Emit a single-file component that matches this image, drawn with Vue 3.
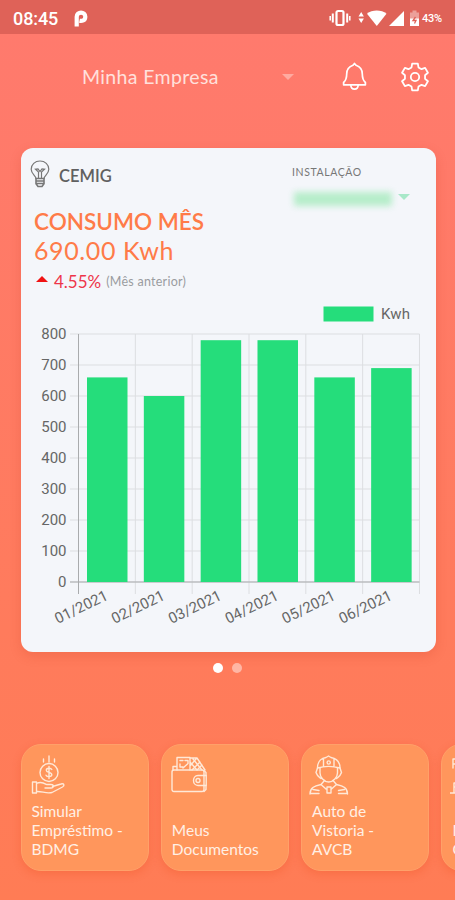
<template>
  <main class="app">
    <header class="status">
      <span class="clock">08:45</span>
      <svg class="p-logo" width="14" height="17" viewBox="0 0 14 17">
        <path d="M2.7 16.5V6.8C2.7 1.2 11.3 1.2 11.3 6.7C11.3 10.7 7.8 11.3 5.5 10.8" fill="none" stroke="#fff" stroke-width="4.2" stroke-linejoin="round" />
      </svg>
      <svg class="status-icons" width="92" height="18" viewBox="0 0 92 18">
        <g fill="none" stroke="#fff">
          <rect x="7.5" y="2" width="7" height="14" rx="1.5" stroke-width="2.2" />
          <path d="M3.8 4.5v9M18.2 4.5v9" stroke-width="2" />
          <path d="M1.2 7v4.5M20.8 7v4.5" stroke-width="1.5" />
        </g>
        <g fill="#fff">
          <path d="M29.5 7.5h5.4L32.2 3zM29.5 9.5h5.4L32.2 14z" />
          <path d="M38 4.8C43 .5 52.5 .5 57.5 4.8L47.8 17z" />
          <path d="M60 17H75V2z" />
          <path d="M81 3.5h2.5v-2h4v2H90V10h-9z" opacity=".4" />
          <path d="M81 9.5h9V17h-9z" />
        </g>
        <path d="M86.5 8l-2.5 3.5h3l-1.5 3" fill="none" stroke="#df6258" stroke-width="1.3" />
      </svg>
      <span class="battery">43%</span>
    </header>

    <nav class="topbar">
      <span class="company">Minha Empresa</span>
      <span class="arrow"></span>
      <svg class="bell" width="25" height="29" viewBox="0 0 25 29" fill="none" stroke="#fff" stroke-width="1.7" stroke-linejoin="round">
        <path d="M12.5 1.5L11 3.3C6.5 4.8 4.7 8 4.7 12C4.7 17 3.8 18.5 1.6 20.5V22.8H23.4V20.5C21.2 18.5 20.3 17 20.3 12C20.3 8 18.5 4.8 14 3.3z" />
        <path d="M8.8 23C9 28.5 16 28.5 16.2 23" />
      </svg>
      <svg class="gear" width="28" height="30" viewBox="-14 -15 28 30" fill="none" stroke="#fff" stroke-width="1.8" stroke-linejoin="round">
        <path :d="gearPath" />
        <circle r="4.2" />
      </svg>
    </nav>

    <section class="card">
      <div class="card-head">
        <svg class="bulb" width="20" height="28" viewBox="0 0 20 28" fill="none" stroke="#777" stroke-width="1.2">
          <path d="M6 18.5C5.8 15.5 1.2 14 1.2 9.2C1.2 4.5 5 1 10 1S18.8 4.5 18.8 9.2C18.8 14 14.2 15.5 14 18.5z" />
          <path d="M8.5 18V12L5.5 9.3L8 9L10 11.5L12 9L14.5 9.3L11.5 12V18" />
          <path d="M6 18.5h8v5.2l-2 2.8H8l-2-2.8zM6 21h8M6.2 23.5h7.6" stroke-width="1.6" />
        </svg>
        <span class="brand">CEMIG</span>
        <div class="install">
          <div class="install-label">INSTALAÇÃO</div>
          <div class="install-value">
            <span class="hidden-number"></span>
            <span class="arrow green"></span>
          </div>
        </div>
      </div>
      <div class="summary">
        <h2>CONSUMO MÊS</h2>
        <div class="total">690.00 Kwh</div>
        <div class="change">
          <span class="up"></span>
          <span class="percent">4.55%</span>
          <span class="previous">(Mês anterior)</span>
        </div>
      </div>
      <svg class="chart" width="415" height="352" viewBox="0 0 415 352">
        <rect x="302.5" y="6.5" width="50" height="15" fill="#25dd7b" />
        <text x="360" y="19" textLength="29">Kwh</text>
        <g stroke="#dcdee1">
          <path v-for="n in 9" :key="n" :d="`M49 ${y((n - 1) * 100)}H398.5`" />
          <path v-for="n in 6" :key="n" :d="`M${57.5 + n * step} 34V294`" />
        </g>
        <g stroke="#a9abad">
          <path d="M57.5 34V294" />
          <path d="M49 282H398.5" />
        </g>
        <text v-for="n in 9" :key="n" x="45.5" :y="y((n - 1) * 100) + 5" text-anchor="end">{{ (n - 1) * 100 }}</text>
        <g v-for="(item, i) in months" :key="item.label">
          <rect :x="66 + i * step" :y="y(item.value)" width="40.5" :height="282 - y(item.value)" fill="#25dd7b" />
          <text :transform="`translate(${88 + i * step} 299) rotate(-26)`" text-anchor="end" textLength="57">{{ item.label }}</text>
        </g>
      </svg>
    </section>

    <div class="dots"><i></i><i></i></div>

    <section class="shortcuts">
      <div class="shortcut">
        <svg width="36" height="40" viewBox="0 0 36 40">
          <path d="M18 1v6M12.5 4v3M23.5 4v3" />
          <circle cx="18" cy="17.5" r="9" />
          <path d="M20.8 14.5C19.8 12.6 15.3 12.8 15.3 15.2C15.3 18 20.8 16.8 20.8 19.8C20.8 22.2 16 22.2 15 20.2M18 11.5v12" />
          <path d="M1.5 27h4v11h-4zM5.5 28.5C10 26 13 28 15.5 29.5H20C23 29.5 23 33 20 33H14M21.5 31.5L30 29C33 28 34 30.5 31.5 32L21 37.5C15 39 11 36 5.5 36.5" />
        </svg>
        <span>Simular<br>Empréstimo -<br>BDMG</span>
      </div>
      <div class="shortcut">
        <svg width="36" height="40" viewBox="0 0 36 40">
          <rect x="1" y="15" width="32" height="21.5" rx="2" />
          <path d="M2 15V11.5h3M6 15V2.5h13V15M19 3h7l8 12M9 5.5h3M9 9v3h3M14 5.5h3v3L12 13M19 7l7 8M22 4l9 11M19 11l6-7M21 15l8-8M26 15l5-5" />
          <path d="M35.2 20.5H27C21 20.5 21 30.5 27 30.5h8.2z" />
          <circle cx="27" cy="25.5" r="2" />
          <path d="M33 15.5l2 2v3M35 30.5v4l-2 2" />
        </svg>
        <span>Meus<br>Documentos</span>
      </div>
      <div class="shortcut">
        <svg class="fireman" width="40" height="40" viewBox="0 0 40 40">
          <path d="M8.5 13C8.5 6 13 3 17 2.5L19.5 1L22 2.5C27 3.5 31 7 31 13C24 11 15 11 8.5 13zM14.5 4v7M25 4v7" />
          <circle cx="19.7" cy="7.5" r="1.6" />
          <path d="M8.5 13L7 17.5C8.5 22 11 22.5 12 23.5M31 13l1.5 4.5C31 22 28.5 22.5 27.5 23.5M11 13V18C11 22 15 27 19.7 27S28.5 22 28.5 18V13" />
          <path d="M1 39C1 33 5 31 12 29.5L15.5 25.5M38.5 39C38.5 33 34.5 31 27.5 29.5L24 25.5M1 38.5h9M29.5 38.5h9M4 34.5l6 1M35.5 34.5l-6 1M12 29.5L17 34M27.5 29.5L22.5 34M18 32h4v6h-4z" />
        </svg>
        <span>Auto de<br>Vistoria -<br>AVCB</span>
      </div>
      <div class="shortcut">
        <svg class="last" width="36" height="40" viewBox="0 0 36 40">
          <path d="M3 4h7M3 9h7M3 4v9M0 38h12M4 37V28h6M4 32h6" />
        </svg>
        <span>M<br>C</span>
      </div>
    </section>
  </main>
</template>

<script setup>
const step = 56.83
const months = [
  { label: '01/2021', value: 660 },
  { label: '02/2021', value: 600 },
  { label: '03/2021', value: 780 },
  { label: '04/2021', value: 780 },
  { label: '05/2021', value: 660 },
  { label: '06/2021', value: 690 },
]

function y(value) {
  return 282 - value * 0.31
}

// six teeth, each one drawn with two inner and two outer points
const gearPath = makeGear()
function makeGear() {
  const points = []
  for (let i = 0; i < 6; i++) {
    const list = [[-20, 10.2], [-12, 13.6], [12, 13.6], [20, 10.2]]
    list.forEach(([deg, r]) => {
      const a = (i * 60 + deg) * Math.PI / 180
      points.push((Math.sin(a) * r).toFixed(2) + ' ' + (-Math.cos(a) * r).toFixed(2))
    })
  }
  return 'M' + points.join('L') + 'Z'
}
</script>

<style>
body {
  margin: 0;
  overflow: hidden;
}
</style>

<style scoped>
.app {
  width: 455px;
  height: 900px;
  overflow: hidden;
  background: linear-gradient(#ff7a6e, #ff7b5c 70%, #ff7c55);
  font-family: Lato, "Noto Sans", sans-serif;
  color: #fff;
}

.status {
  height: 34px;
  box-sizing: border-box;
  padding: 2px 12px 0 13px;
  display: flex;
  align-items: center;
  background: #df6258;
  font-family: Roboto, sans-serif;
}

.clock {
  width: 61px;
  font-size: 18px;
  font-weight: 500;
  letter-spacing: -0.1px;
}

.status-icons {
  margin-left: 241px;
}

.battery {
  margin-left: 1px;
  font-size: 11px;
  letter-spacing: -0.2px;
  font-weight: 500;
}

.topbar {
  height: 114px;
  box-sizing: border-box;
  padding: 0 25px 29px 82px;
  display: flex;
  align-items: center;
}

.company {
  width: 200px;
  font-size: 19.5px;
  letter-spacing: 0.35px;
  color: #ffe0dc;
}

.arrow {
  width: 0;
  border: 6px solid transparent;
  border-top: 6px solid #ffaaa0;
  border-bottom: 0;
}

.bell {
  margin-left: 48px;
}

.gear {
  margin-left: 34px;
}

.card {
  width: 415px;
  height: 504px;
  margin-left: 21px;
  border-radius: 12px;
  background: #f4f6fa;
  box-shadow: 0 4px 12px rgba(190, 50, 20, 0.18);
  overflow: hidden;
}

.card-head {
  height: 59px;
  display: flex;
}

.bulb {
  margin: 12px 0 0 9px;
}

.brand {
  width: 233px;
  margin: 17px 0 0 9px;
  font-size: 16.5px;
  line-height: 22px;
  font-weight: 600;
  color: #606060;
}

.install-label {
  margin-top: 17px;
  font-size: 10.5px;
  line-height: 14px;
  letter-spacing: 0.6px;
  color: #777;
}

.install-value {
  display: flex;
  margin-top: 12px;
}

.hidden-number {
  width: 98px;
  height: 14px;
  margin: 1px 6px 0 2px;
  background: #b6edca;
  filter: blur(3px);
}

.arrow.green {
  height: 0;
  margin-top: 3px;
  border-top-color: #a8e8c9;
}

.summary {
  height: 93px;
  padding-left: 13px;
  color: #ff7b48;
}

h2 {
  margin: 0;
  font-size: 22.5px;
  line-height: 29px;
  font-weight: 600;
}

.total {
  font-size: 25px;
  line-height: 28px;
  letter-spacing: 0.6px;
}

.change {
  display: flex;
  align-items: center;
  height: 35px;
}

.up {
  margin: -5px 6px 0 2px;
  border: 6px solid transparent;
  border-top: 0;
  border-bottom: 6px solid #f01313;
}

.percent {
  color: #ee354a;
  font-size: 17px;
  margin-right: 5px;
}

.previous {
  color: #9a9ca0;
  font-size: 12.5px;
  letter-spacing: 0.25px;
}

.chart {
  display: block;
}

.chart text {
  font: 15px Roboto, sans-serif;
  fill: #666;
}

.dots {
  height: 92px;
  box-sizing: border-box;
  padding-top: 11px;
  display: flex;
  justify-content: center;
  gap: 9px;
}

.dots i {
  width: 10px;
  height: 10px;
  border-radius: 50%;
  background: #fff;
}

.dots i + i {
  opacity: 0.45;
}

.shortcuts {
  display: flex;
  gap: 12.3px;
  padding-left: 20.5px;
}

.shortcut {
  flex: none;
  width: 128px;
  height: 127px;
  box-sizing: border-box;
  padding: 10px 10px 11px;
  border: 1px solid #ffa069;
  border-radius: 20px;
  background: #ff965c;
  box-shadow: 0 3px 9px rgba(230, 70, 20, 0.25);
  display: flex;
  flex-direction: column;
  justify-content: space-between;
  font-size: 15.5px;
  line-height: 19px;
  color: #fff0e5;
}

.shortcut svg {
  flex: none;
  margin-left: -1px;
  fill: none;
  stroke: #ffe9d8;
  stroke-width: 1.4;
  stroke-linejoin: round;
  stroke-linecap: round;
}

.shortcut .fireman {
  margin-left: -3px;
}

.shortcut .last {
  margin-left: -2px;
}

.shortcut span {
  white-space: nowrap;
}
</style>
